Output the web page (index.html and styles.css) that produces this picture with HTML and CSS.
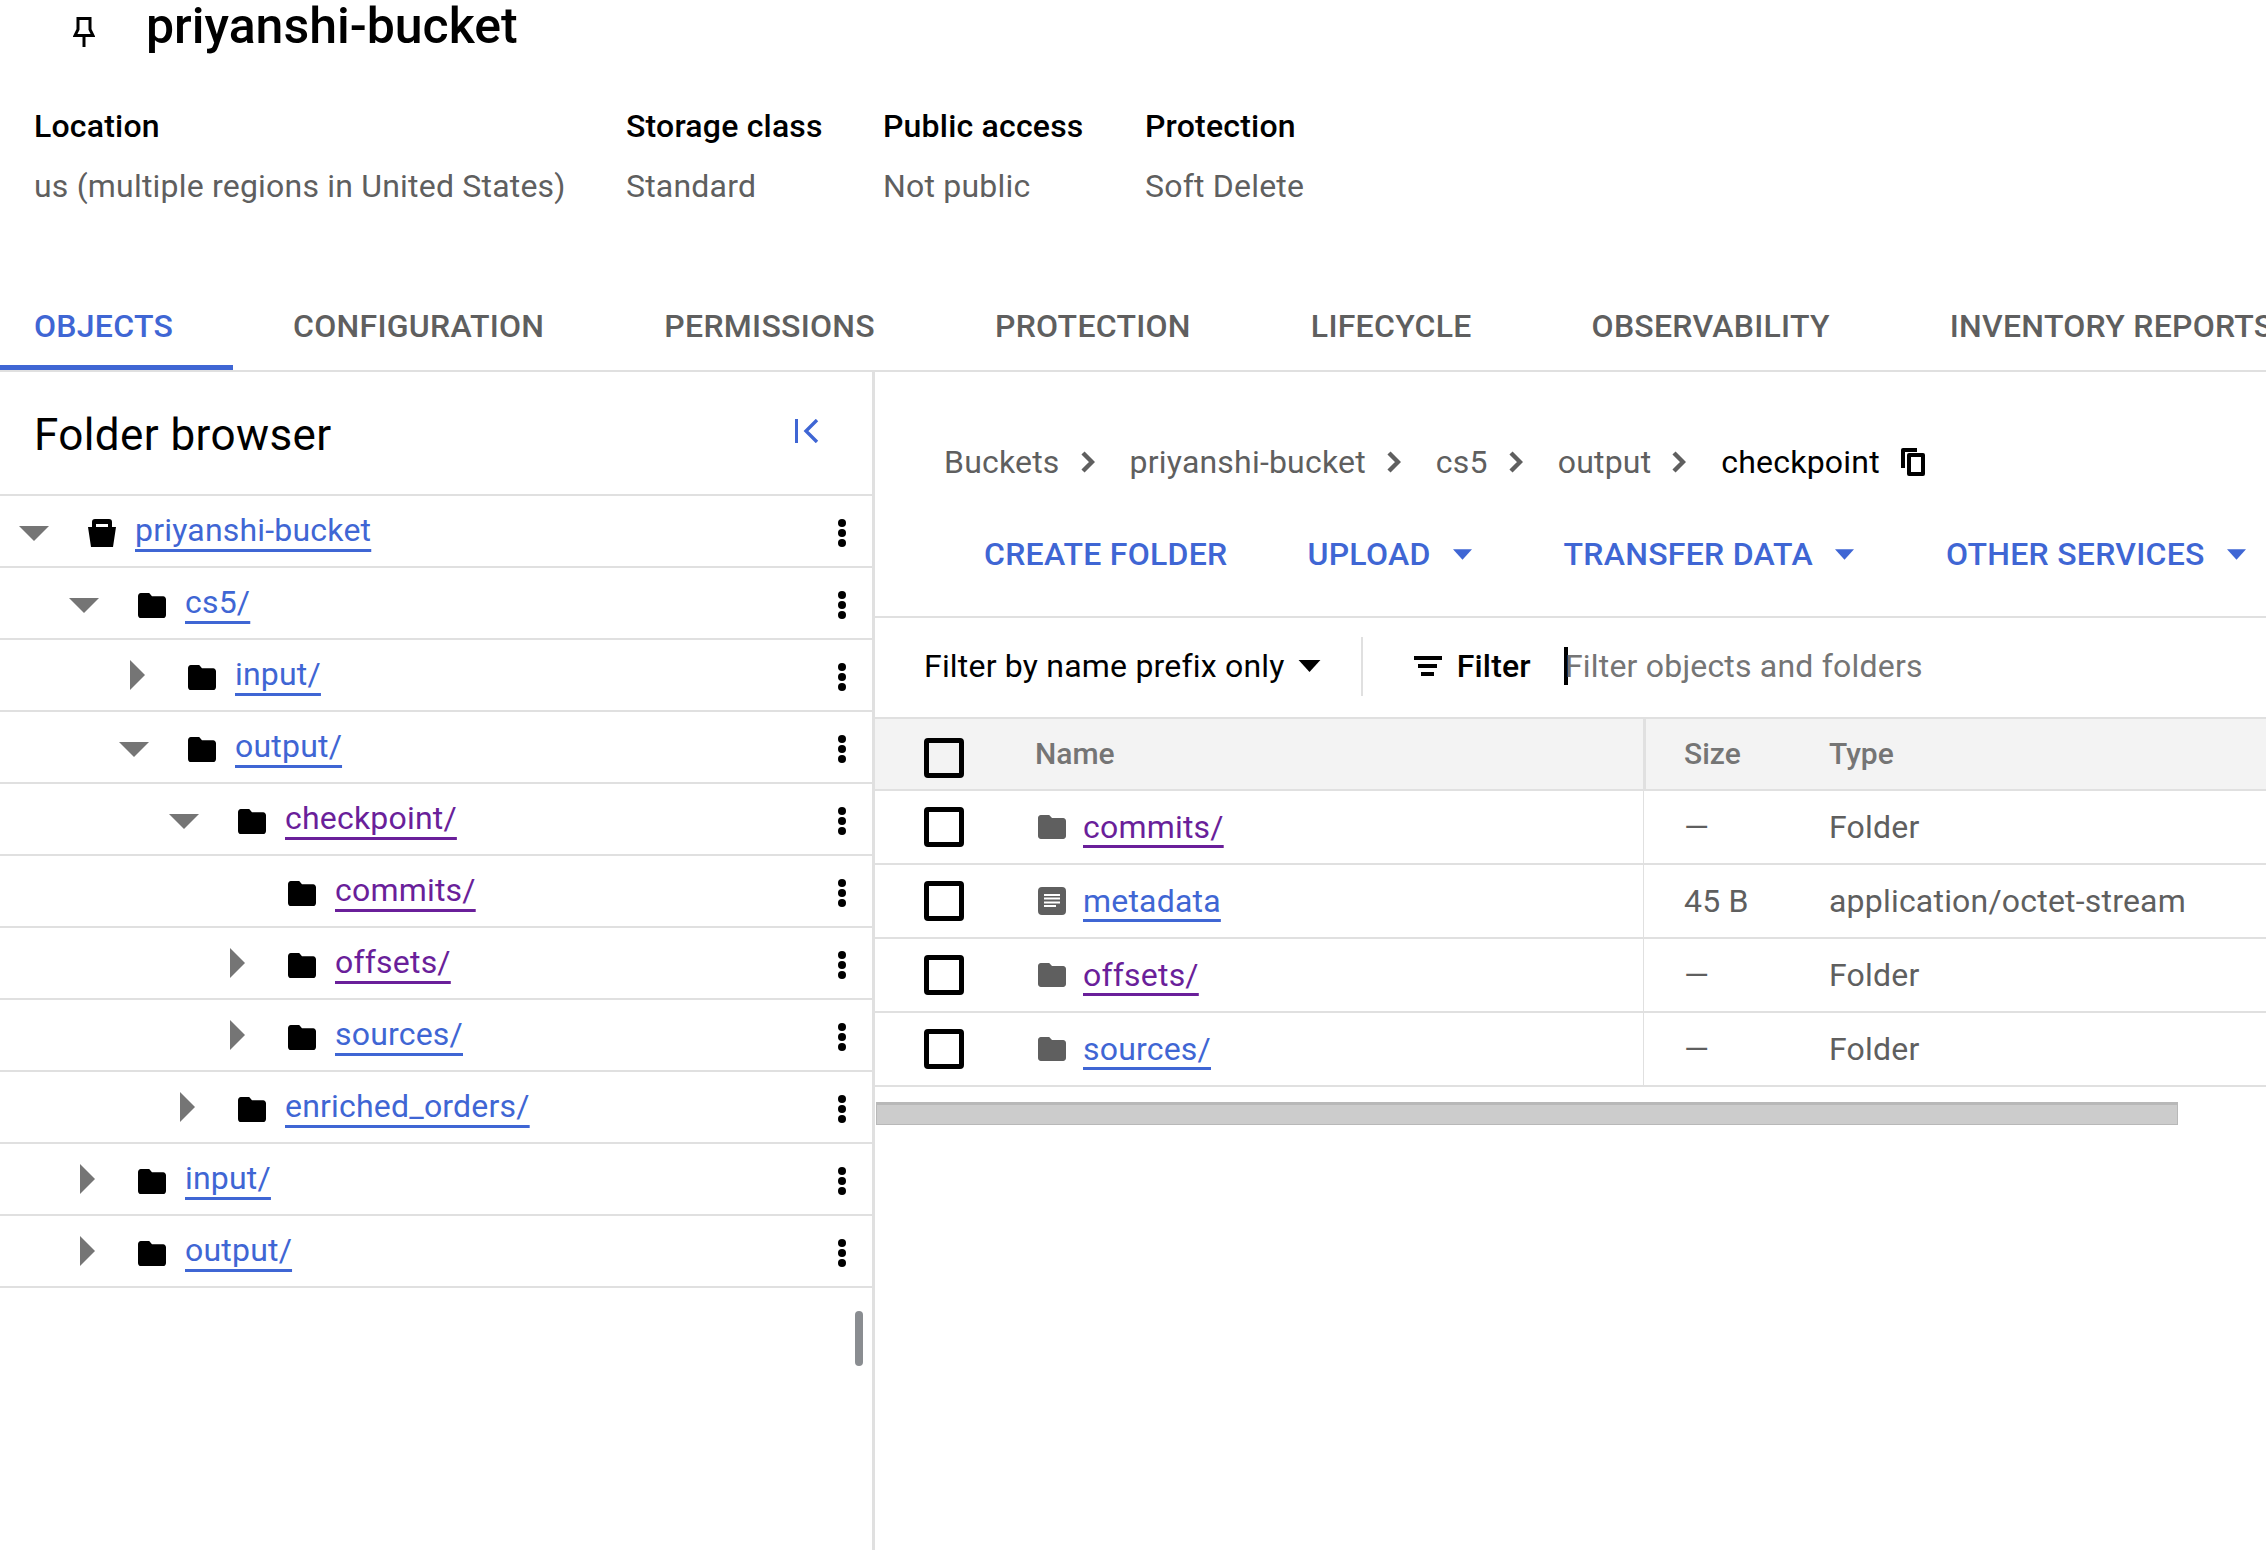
FILE: index.html
```html
<!DOCTYPE html>
<html lang="en">
<head>
    <meta charset="UTF-8">
    <meta name="viewport" content="width=device-width, initial-scale=1.0">
    <title>priyanshi-bucket</title>
    <link rel="stylesheet" href="styles.css">
</head>
<body>
    <!-- Icons -->
    <svg class="sprites" width="0" height="0">
        <symbol id="i-folder" viewBox="2 4 20 16" preserveAspectRatio="none"><path d="M10 4H4c-1.1 0-1.99.9-1.99 2L2 18c0 1.1.9 2 2 2h16c1.1 0 2-.9 2-2V8c0-1.1-.9-2-2-2h-8l-2-2z"/></symbol>
        <symbol id="i-doc" viewBox="0 0 28 28"><path fill-rule="evenodd" d="M4 0h20a4 4 0 0 1 4 4v20a4 4 0 0 1-4 4H4a4 4 0 0 1-4-4V4a4 4 0 0 1 4-4zM6 7v2h16V7zM6 10.500v2h16v-2zM6 14.500v2h16v-2zM6 18v2h12v-2z"/></symbol>
        <symbol id="i-down" viewBox="0 0 30 30"><path d="M0 10h30L15 25z"/></symbol>
        <symbol id="i-right" viewBox="0 0 30 30"><path d="M11 0l15 15-15 15z"/></symbol>
        <symbol id="i-more" viewBox="0 0 8 28"><circle cx="4" cy="4" r="4"/><circle cx="4" cy="14" r="4"/><circle cx="4" cy="24" r="4"/></symbol>
        <symbol id="i-chev" viewBox="0 0 14 22"><path d="M2 2l9 9-9 9" fill="none" stroke="currentColor" stroke-width="4.4"/></symbol>
        <symbol id="i-caret" viewBox="0 0 20 11"><path d="M0 0h20L10 11z"/></symbol>
    </svg>

    <div class="page">
        <header class="bucket-head">
            <svg class="pin" viewBox="0 0 22 30"><path d="M5 1.500h12v11l3 6H2l3-6z" fill="none" stroke="#000" stroke-width="3"/><path d="M11 20v10" stroke="#000" stroke-width="3"/></svg>
            <h1 class="bucket-name">priyanshi-bucket</h1>
        </header>

        <div class="summary">
            <div class="summary-col col-location"><div class="summary-label">Location</div><div class="summary-value">us (multiple regions in United States)</div></div>
            <div class="summary-col col-class"><div class="summary-label">Storage class</div><div class="summary-value">Standard</div></div>
            <div class="summary-col col-access"><div class="summary-label">Public access</div><div class="summary-value">Not public</div></div>
            <div class="summary-col"><div class="summary-label">Protection</div><div class="summary-value">Soft Delete</div></div>
        </div>

        <nav class="tabs">
            <a class="tab tab-active">OBJECTS</a>
            <a class="tab">CONFIGURATION</a>
            <a class="tab">PERMISSIONS</a>
            <a class="tab">PROTECTION</a>
            <a class="tab">LIFECYCLE</a>
            <a class="tab">OBSERVABILITY</a>
            <a class="tab">INVENTORY REPORTS</a>
        </nav>

        <div class="main">
            <!-- Folder browser -->
            <aside class="browser">
                <div class="browser-head">
                    <h2 class="browser-title">Folder browser</h2>
                    <svg class="collapse" viewBox="0 0 24 24"><path d="M0 0h3v24H0z"/><path d="M22 1L11 12l11 11" fill="none" stroke="currentColor" stroke-width="3.4"/></svg>
                </div>
                <ul class="tree">
                    <li class="node lvl-0"><svg class="twisty"><use href="#i-down"/></svg><svg class="node-icon" viewBox="0 0 28 28"><path fill-rule="evenodd" d="M7 0h14a3 3 0 0 1 3 3v5h4l-3 20H3L0 8h4V3a3 3 0 0 1 3-3zM8 5v3h12V5z"/></svg><a class="link">priyanshi-bucket</a><svg class="more"><use href="#i-more"/></svg></li>
                    <li class="node lvl-1"><svg class="twisty"><use href="#i-down"/></svg><svg class="node-icon"><use href="#i-folder"/></svg><a class="link">cs5/</a><svg class="more"><use href="#i-more"/></svg></li>
                    <li class="node lvl-2"><svg class="twisty"><use href="#i-right"/></svg><svg class="node-icon"><use href="#i-folder"/></svg><a class="link">input/</a><svg class="more"><use href="#i-more"/></svg></li>
                    <li class="node lvl-2"><svg class="twisty"><use href="#i-down"/></svg><svg class="node-icon"><use href="#i-folder"/></svg><a class="link">output/</a><svg class="more"><use href="#i-more"/></svg></li>
                    <li class="node lvl-3"><svg class="twisty"><use href="#i-down"/></svg><svg class="node-icon"><use href="#i-folder"/></svg><a class="link visited">checkpoint/</a><svg class="more"><use href="#i-more"/></svg></li>
                    <li class="node lvl-4"><span class="twisty"></span><svg class="node-icon"><use href="#i-folder"/></svg><a class="link visited">commits/</a><svg class="more"><use href="#i-more"/></svg></li>
                    <li class="node lvl-4"><svg class="twisty"><use href="#i-right"/></svg><svg class="node-icon"><use href="#i-folder"/></svg><a class="link visited">offsets/</a><svg class="more"><use href="#i-more"/></svg></li>
                    <li class="node lvl-4"><svg class="twisty"><use href="#i-right"/></svg><svg class="node-icon"><use href="#i-folder"/></svg><a class="link">sources/</a><svg class="more"><use href="#i-more"/></svg></li>
                    <li class="node lvl-3"><svg class="twisty"><use href="#i-right"/></svg><svg class="node-icon"><use href="#i-folder"/></svg><a class="link">enriched_orders/</a><svg class="more"><use href="#i-more"/></svg></li>
                    <li class="node lvl-1"><svg class="twisty"><use href="#i-right"/></svg><svg class="node-icon"><use href="#i-folder"/></svg><a class="link">input/</a><svg class="more"><use href="#i-more"/></svg></li>
                    <li class="node lvl-1"><svg class="twisty"><use href="#i-right"/></svg><svg class="node-icon"><use href="#i-folder"/></svg><a class="link">output/</a><svg class="more"><use href="#i-more"/></svg></li>
                </ul>
                <div class="tree-scroll"></div>
            </aside>

            <!-- Objects list -->
            <section class="objects">
                <div class="crumbs">
                    <span class="crumb crumb-buckets">Buckets</span><svg class="chev"><use href="#i-chev"/></svg>
                    <span class="crumb">priyanshi-bucket</span><svg class="chev"><use href="#i-chev"/></svg>
                    <span class="crumb">cs5</span><svg class="chev"><use href="#i-chev"/></svg>
                    <span class="crumb">output</span><svg class="chev"><use href="#i-chev"/></svg>
                    <span class="crumb crumb-current">checkpoint</span>
                    <svg class="copy" viewBox="0 0 24 28"><path fill-rule="evenodd" d="M2 0h14v4H4v16H0V2a2 2 0 0 1 2-2zM8 5h14a2 2 0 0 1 2 2v19a2 2 0 0 1-2 2H8a2 2 0 0 1-2-2V7a2 2 0 0 1 2-2zM10 9v15h10V9z"/></svg>
                </div>

                <div class="actions">
                    <button class="action act-create">CREATE FOLDER</button>
                    <button class="action act-upload">UPLOAD<svg class="action-caret"><use href="#i-caret"/></svg></button>
                    <button class="action act-transfer">TRANSFER DATA<svg class="action-caret"><use href="#i-caret"/></svg></button>
                    <button class="action">OTHER SERVICES<svg class="action-caret"><use href="#i-caret"/></svg></button>
                </div>

                <div class="filter-bar">
                    <span class="prefix">Filter by name prefix only</span>
                    <svg class="prefix-caret"><use href="#i-caret"/></svg>
                    <span class="filter-divider"></span>
                    <span class="filter-icon"><i class="bar bar-1"></i><i class="bar bar-2"></i><i class="bar bar-3"></i></span>
                    <span class="filter-label">Filter</span>
                    <span class="filter-input"><span class="cursor"></span>Filter objects and folders</span>
                </div>

                <div class="table">
                    <div class="row row-head">
                        <span class="cell-check"><span class="checkbox"></span></span>
                        <span class="cell-name">Name</span>
                        <span class="cell-size">Size</span>
                        <span class="cell-type">Type</span>
                    </div>
                    <div class="row">
                        <span class="cell-check"><span class="checkbox"></span></span>
                        <span class="cell-name"><svg class="row-icon"><use href="#i-folder"/></svg><a class="link visited">commits/</a></span>
                        <span class="cell-size">—</span>
                        <span class="cell-type">Folder</span>
                    </div>
                    <div class="row">
                        <span class="cell-check"><span class="checkbox"></span></span>
                        <span class="cell-name"><svg class="row-icon doc"><use href="#i-doc"/></svg><a class="link">metadata</a></span>
                        <span class="cell-size">45 B</span>
                        <span class="cell-type">application/octet-stream</span>
                    </div>
                    <div class="row">
                        <span class="cell-check"><span class="checkbox"></span></span>
                        <span class="cell-name"><svg class="row-icon"><use href="#i-folder"/></svg><a class="link visited">offsets/</a></span>
                        <span class="cell-size">—</span>
                        <span class="cell-type">Folder</span>
                    </div>
                    <div class="row">
                        <span class="cell-check"><span class="checkbox"></span></span>
                        <span class="cell-name"><svg class="row-icon"><use href="#i-folder"/></svg><a class="link">sources/</a></span>
                        <span class="cell-size">—</span>
                        <span class="cell-type">Folder</span>
                    </div>
                </div>
                <div class="h-scroll"></div>
            </section>
        </div>
    </div>
</body>
</html>
```

FILE: styles.css
```css
html, body {
    margin: 0;
    height: 100%;
    overflow: hidden;
    background: #fff;
}

body {
    font-family: Roboto, "Noto Sans", sans-serif;
    font-size: 32px;
    letter-spacing: 0.2px;
    color: #000;
}

.sprites {
    position: absolute;
}

.page {
    width: 2266px;
    height: 1550px;
    display: flex;
    flex-direction: column;
}

/* Header */
.bucket-head {
    height: 52px;
    display: flex;
    align-items: center;
    padding-left: 73px;
}

.pin {
    width: 22px;
    height: 30px;
    margin-top: 12px;
    flex: none;
}

.bucket-name {
    margin: 0 0 0 51px;
    font-size: 50px;
    font-weight: 500;
    line-height: 52px;
    letter-spacing: 0;
    white-space: nowrap;
}

.summary {
    display: flex;
    padding: 49px 0 0 34px;
    height: 135px;
}

.summary-col {
    white-space: nowrap;
}

.col-location {
    width: 592px;
}

.col-class {
    width: 257px;
}

.col-access {
    width: 262px;
}

.summary-label {
    line-height: 50px;
    font-weight: 500;
}

.summary-value {
    margin-top: 10px;
    line-height: 50px;
    color: #5f5f5f;
}

.tabs {
    height: 57px;
    display: flex;
    border-bottom: 2px solid #e0e0e0;
    overflow: hidden;
    padding-top: 77px;
}

.tab {
    padding: 0 60px;
    height: 57px;
    line-height: 26px;
    font-weight: 500;
    letter-spacing: 0.27px;
    color: #5f5f5f;
    white-space: nowrap;
    box-sizing: border-box;
}

.tab-active {
    padding-left: 34px;
    color: #3f66d4;
    border-bottom: 5px solid #3f66d4;
}

.main {
    flex: 1;
    display: flex;
    min-height: 0;
}

/* Folder browser */
.browser {
    position: relative;
    width: 872px;
    flex: none;
    border-right: 3px solid #e0e0e0;
}

.browser-head {
    height: 122px;
    display: flex;
    align-items: center;
    justify-content: space-between;
    padding: 0 53px 0 34px;
    box-sizing: border-box;
}

.browser-title {
    margin: 3px 0 0 0;
    font-size: 44px;
    font-weight: 400;
    letter-spacing: 0.4px;
}

.collapse {
    width: 24px;
    height: 24px;
    color: #3f66d4;
    fill: #3f66d4;
    margin-bottom: 4px;
}

.tree {
    list-style: none;
    margin: 0;
    padding: 0;
    border-top: 2px solid #e0e0e0;
}

.node {
    height: 72px;
    display: flex;
    align-items: center;
    border-bottom: 2px solid #e0e0e0;
    box-sizing: border-box;
}

.lvl-0 { padding-left: 19px; }
.lvl-1 { padding-left: 69px; }
.lvl-2 { padding-left: 119px; }
.lvl-3 { padding-left: 169px; }
.lvl-4 { padding-left: 219px; }

.twisty {
    width: 30px;
    height: 30px;
    flex: none;
    fill: #757575;
}

.node-icon {
    width: 28px;
    height: 25px;
    margin-left: 39px;
    margin-top: 4px;
    flex: none;
    fill: #000;
}

.lvl-0 .node-icon {
    height: 28px;
}

.link {
    margin-left: 19px;
    color: #3f66d4;
    text-decoration: underline;
    text-decoration-thickness: 3px;
    text-underline-offset: 7px;
    text-decoration-skip-ink: none;
}

.node .link {
    margin-bottom: 2px;
    text-underline-offset: 8px;
}

.link.visited {
    color: #6a1f9a;
}

.more {
    width: 8px;
    height: 28px;
    margin-left: auto;
    margin-right: 26px;
    margin-top: 4px;
    flex: none;
    fill: #000;
}

.tree-scroll {
    position: absolute;
    right: 9px;
    top: 939px;
    width: 8px;
    height: 55px;
    border-radius: 4px;
    background: #8a8d91;
}

/* Objects */
.objects {
    flex: 1;
    min-width: 0;
}

.crumbs {
    display: flex;
    align-items: center;
    height: 48px;
    margin-top: 66px;
    padding-left: 69px;
    color: #5f5f5f;
    white-space: nowrap;
}

.chev {
    width: 14px;
    height: 22px;
    margin: 0 35px 0 21px;
    flex: none;
    color: #5f5f5f;
}

.crumb-current {
    color: #000;
}

.copy {
    width: 24px;
    height: 28px;
    margin-left: 21px;
    fill: #000;
}

.actions {
    display: flex;
    align-items: center;
    height: 48px;
    margin-top: 44px;
    padding-bottom: 38px;
    padding-left: 109px;
    border-bottom: 2px solid #e0e0e0;
}

.action {
    display: flex;
    align-items: center;
    padding: 0;
    border: none;
    background: none;
    font: 500 32px Roboto, sans-serif;
    letter-spacing: 0.27px;
    color: #3f66d4;
    white-space: nowrap;
}

.act-create {
    margin-right: 80px;
}

.act-upload {
    margin-right: 92px;
}

.act-transfer {
    margin-right: 92px;
}

.action-caret {
    width: 19px;
    height: 11px;
    margin-left: 22px;
    fill: #3f66d4;
}

.filter-bar {
    display: flex;
    align-items: center;
    height: 96px;
    padding: 0 0 3px 49px;
    white-space: nowrap;
}

.prefix-caret {
    width: 25px;
    height: 12px;
    margin-left: 12px;
    fill: #000;
}

.filter-divider {
    width: 2px;
    height: 59px;
    margin: 0 51px 0 39px;
    background: #e0e0e0;
}

.filter-icon {
    display: flex;
    flex-direction: column;
    align-items: center;
    gap: 4px;
    width: 28px;
}

.bar {
    display: block;
    height: 4px;
    background: #000;
}

.bar-1 { width: 28px; }
.bar-2 { width: 19px; }
.bar-3 { width: 13px; }

.filter-label {
    margin-left: 15px;
    font-weight: 500;
}

.filter-input {
    display: flex;
    align-items: center;
    margin-left: 33px;
    color: #757575;
}

.cursor {
    width: 4px;
    height: 38px;
    background: #000;
    margin-right: -3px;
}

.table {
    border-top: 2px solid #e0e0e0;
}

.row {
    display: flex;
    align-items: stretch;
    height: 74px;
    border-bottom: 2px solid #e0e0e0;
    box-sizing: border-box;
    color: #5f5f5f;
}

.row-head {
    height: 72px;
    background: #f3f3f3;
    color: #757575;
    font-size: 30px;
    font-weight: 500;
    letter-spacing: 0;
}

.cell-check {
    width: 160px;
    padding-left: 49px;
    box-sizing: border-box;
    display: flex;
    align-items: center;
    flex: none;
}

.checkbox {
    width: 40px;
    height: 40px;
    border: 5px solid #000;
    border-radius: 4px;
    box-sizing: border-box;
}

.row-head .checkbox {
    margin-top: 8px;
}

.cell-name {
    width: 608px;
    display: flex;
    align-items: center;
    flex: none;
}

.row-icon {
    width: 28px;
    height: 24px;
    margin-left: 3px;
    fill: #5f5f5f;
}

.row-icon.doc {
    height: 28px;
}

.row .link {
    margin-left: 17px;
}

.cell-size {
    width: 186px;
    padding-left: 40px;
    box-sizing: border-box;
    display: flex;
    align-items: center;
    flex: none;
    border-left: 1px solid #e0e0e0;
}

.row-head .cell-name,
.row-head .cell-size,
.row-head .cell-type {
    padding-bottom: 2px;
}

.row-head .cell-size {
    padding-left: 38px;
    border-left: 3px solid #e0e0e0;
}

.cell-type {
    display: flex;
    align-items: center;
    white-space: nowrap;
}

.h-scroll {
    width: 1302px;
    height: 23px;
    margin: 15px 0 0 1px;
    background: #ccc;
    border: 1px solid #b8b8b8;
    border-top-width: 3px;
    box-sizing: border-box;
}
```
